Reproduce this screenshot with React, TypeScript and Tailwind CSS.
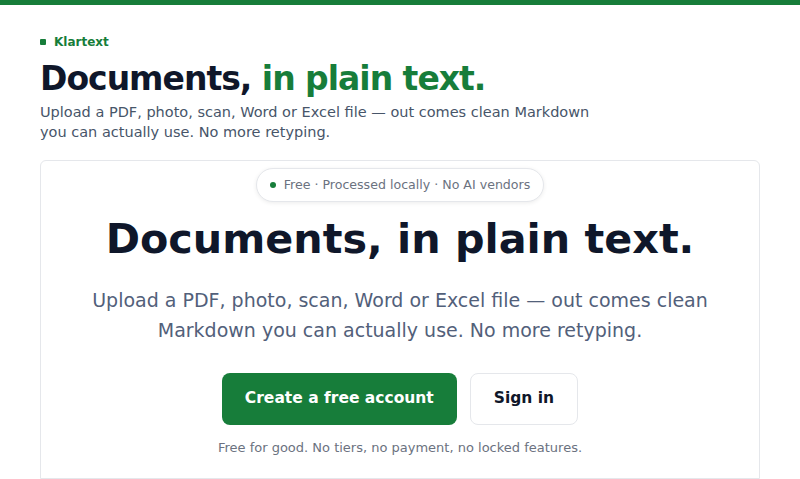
import React from "react";

export default function App() {
  return (
    <div className="min-h-screen bg-white" style={{ fontFamily: '"DejaVu Sans", sans-serif' }}>
      <div className="h-[5px] bg-[#177d3a]" />
      <div className="px-10 pt-[28px]">
        <div className="flex items-center gap-[8px] text-[12px] leading-[18px] font-bold text-[#177d3a]">
          <span className="w-[6px] h-[6px] rounded-[1px] bg-[#177d3a]" />
          Klartext
        </div>
        <h1 className="mt-[8px] text-[33px] leading-[40px] font-bold tracking-[-1px] text-[#0f172a]">
          Documents, <span className="text-[#177d3a]">in plain text.</span>
        </h1>
        <p className="mt-[3px] text-[14.5px] leading-[20px] text-[#475569] max-w-[556px]">
          Upload a PDF, photo, scan, Word or Excel file — out comes clean Markdown you can actually use. No more retyping.
        </p>
        <div className="mt-[18px] border border-[#e5e7eb] rounded-t-[6px] pb-[20px] flex flex-col items-center">
          <div className="mt-[7px] h-[34px] px-[13px] flex items-center gap-[8px] rounded-full border border-[#e5e7eb] bg-white shadow-[0_1px_4px_rgba(0,0,0,0.08)] text-[12.6px] text-[#6b7280]">
            <span className="w-[6px] h-[6px] rounded-full bg-[#177d3a]" />
            Free · Processed locally · No AI vendors
          </div>
          <h2 className="mt-[11px] text-[41.3px] leading-[52px] font-bold text-[#0f172a]">
            Documents, in plain text.
          </h2>
          <p className="mt-[20px] text-[19px] leading-[30px] text-[#52607a] text-center max-w-[640px]">
            Upload a PDF, photo, scan, Word or Excel file — out comes clean Markdown you can actually use. No more retyping.
          </p>
          <div className="mt-[28px] flex gap-[13px]">
            <button className="h-[52px] px-[23px] rounded-[8px] bg-[#177d3a] text-white text-[15.5px] font-bold">
              Create a free account
            </button>
            <button className="h-[52px] px-[23px] rounded-[8px] border border-[#e5e7eb] bg-white text-[#0f172a] text-[15.5px] font-bold">
              Sign in
            </button>
          </div>
          <p className="mt-[13px] text-[13px] leading-[20px] text-[#6b7280]">
            Free for good. No tiers, no payment, no locked features.
          </p>
        </div>
      </div>
    </div>
  );
}
